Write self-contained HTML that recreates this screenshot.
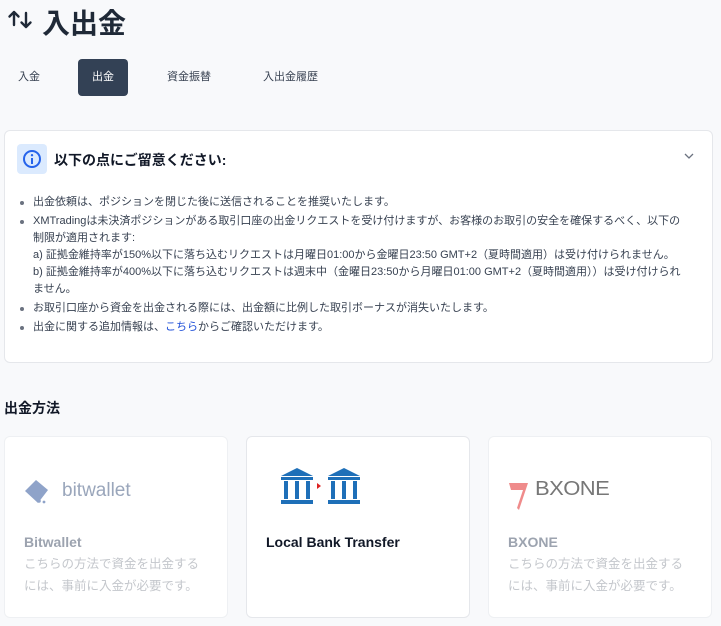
<!DOCTYPE html>
<html><head><meta charset="utf-8"><style>
*{margin:0;padding:0;box-sizing:border-box}
body{width:721px;height:626px;overflow:hidden;background:#f8f9fb;font-family:"Liberation Sans","Noto Sans CJK JP",sans-serif;color:#1f2937;position:relative}
.abs{position:absolute}
h1{position:absolute;left:42px;top:2px;font-size:28px;font-weight:bold;color:#1f2937;white-space:nowrap}
.tab{position:absolute;top:59px;height:37px;line-height:37px;font-size:11px;color:#374151}
.notice{position:absolute;left:4px;top:130px;width:709px;height:233px;background:#fff;border:1px solid #e5e7eb;border-radius:6px}
ul{position:absolute;left:18px;top:194px;width:690px;font-size:11px;color:#374151;line-height:17px;list-style:none}
ul li{position:relative;padding-left:15px;margin-bottom:2px}
ul li:before{content:"";position:absolute;left:2px;top:7px;width:4px;height:4px;border-radius:2px;background:#6b7280}
.card{position:absolute;top:436px;width:224px;height:182px;background:#fff;border:1px solid #eef0f3;border-radius:6px}
.card .t{position:absolute;left:19px;top:97px;font-size:14px;font-weight:bold}
.card .d{position:absolute;left:19px;top:116px;width:176px;font-size:12.5px;line-height:22px;color:#c4c7cc}
</style></head><body>
<svg class="abs" style="left:7px;top:9px" width="26" height="20" viewBox="0 0 26 20"><g fill="none" stroke="#1f2937" stroke-width="2.4" stroke-linecap="round" stroke-linejoin="round"><path d="M7 16V3M2.5 7.5L7 3l4.5 4.5"/><path d="M19 4v14M14.5 13.5L19 18l4.5-4.5"/></g></svg>
<h1>入出金</h1>
<div class="tab" style="left:18px">入金</div>
<div class="tab" style="left:78px;width:50px;background:#334155;color:#fff;border-radius:4px;text-align:center">出金</div>
<div class="tab" style="left:167px">資金振替</div>
<div class="tab" style="left:263px">入出金履歴</div>
<div class="notice"></div>
<div class="abs" style="left:17px;top:144px;width:30px;height:30px;background:#dbeafe;border-radius:4px"></div>
<svg class="abs" style="left:22px;top:149px" width="20" height="20" viewBox="0 0 20 20"><circle cx="10" cy="10" r="8" fill="none" stroke="#2563eb" stroke-width="2"/><rect x="9" y="9" width="2" height="6" fill="#2563eb"/><circle cx="10" cy="6.2" r="1.2" fill="#2563eb"/></svg>
<div class="abs" style="left:54px;top:150px;font-size:14px;font-weight:bold;color:#111827">以下の点にご留意ください:</div>
<svg class="abs" style="left:683px;top:151px" width="12" height="10" viewBox="0 0 12 10"><path d="M2 3l4 4 4-4" fill="none" stroke="#6b7280" stroke-width="1.3"/></svg>
<ul>
<li>出金依頼は、ポジションを閉じた後に送信されることを推奨いたします。</li>
<li>XMTradingは未決済ポジションがある取引口座の出金リクエストを受け付けますが、お客様のお取引の安全を確保するべく、以下の<br>制限が適用されます:<br>a) 証拠金維持率が150%以下に落ち込むリクエストは月曜日01:00から金曜日23:50 GMT+2（夏時間適用）は受け付けられません。<br>b) 証拠金維持率が400%以下に落ち込むリクエストは週末中（金曜日23:50から月曜日01:00 GMT+2（夏時間適用））は受け付けられ<br>ません。</li>
<li>お取引口座から資金を出金される際には、出金額に比例した取引ボーナスが消失いたします。</li>
<li>出金に関する追加情報は、<span style="color:#1d4ed8">こちら</span>からご確認いただけます。</li>
</ul>
<div class="abs" style="left:4px;top:398px;font-size:14px;font-weight:bold;color:#111827">出金方法</div>
<div class="card" style="left:4px">
<svg class="abs" style="left:18px;top:40px" width="30" height="30" viewBox="0 0 30 30"><path d="M2 14L13 3l12 10-10 13z" fill="#8fa3c9"/><circle cx="16" cy="24" r="1.8" fill="#8fa3c9"/><circle cx="21" cy="25" r="1.4" fill="#8fa3c9"/></svg>
<div class="abs" style="left:57px;top:43px;font-size:19px;color:#9aa6bb">bitwallet</div>
<div class="t" style="color:#9ca3af">Bitwallet</div>
<div class="d">こちらの方法で資金を出金するには、事前に入金が必要です。</div>
</div>
<div class="card" style="left:246px;border-color:#e5e7eb">
<svg class="abs" style="left:34px;top:31px" width="84" height="36" viewBox="0 0 84 36"><g fill="#1e6fb8"><path d="M0 8L16 0l16 8z"/><rect x="0" y="9" width="32" height="3"/><rect x="3" y="13" width="4" height="18"/><rect x="14" y="13" width="4" height="18"/><rect x="25" y="13" width="4" height="18"/><rect x="0" y="32" width="32" height="4"/></g><path d="M36 15l4 3-4 3z" fill="#d22"/><g fill="#1e6fb8" transform="translate(47 0)"><path d="M0 8L16 0l16 8z"/><rect x="0" y="9" width="32" height="3"/><rect x="3" y="13" width="4" height="18"/><rect x="14" y="13" width="4" height="18"/><rect x="25" y="13" width="4" height="18"/><rect x="0" y="32" width="32" height="4"/></g></svg>
<div class="t" style="color:#111827">Local Bank Transfer</div>
</div>
<div class="card" style="left:488px">
<svg class="abs" style="left:18px;top:44px" width="22" height="30" viewBox="0 0 22 30"><path d="M2 2h19l-9 27-2-2 6-18H4z" fill="#ef8b8b"/></svg>
<div class="abs" style="left:46px;top:41px;font-size:20px;color:#777;letter-spacing:-0.5px;transform:scaleX(1.1);transform-origin:left">BXONE</div>
<div class="t" style="color:#9ca3af">BXONE</div>
<div class="d">こちらの方法で資金を出金するには、事前に入金が必要です。</div>
</div>
</body></html>
